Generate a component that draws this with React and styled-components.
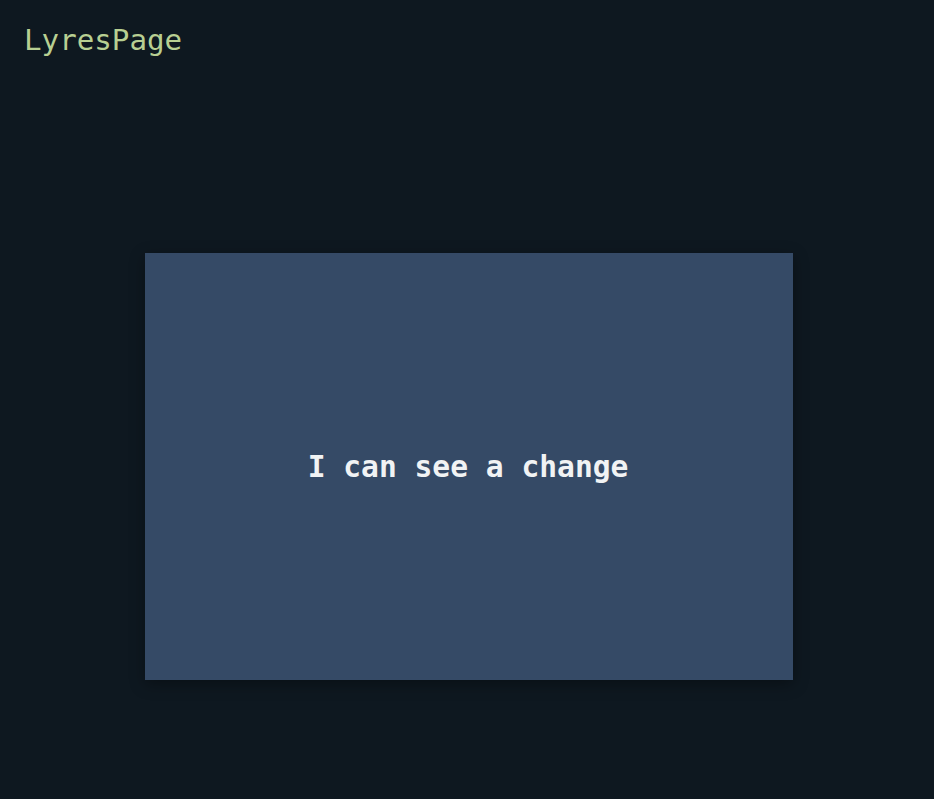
import React from "react";
import styled, { createGlobalStyle } from "styled-components";

const Global = createGlobalStyle`
  html, body { margin: 0; padding: 0; background: #0e1820; }
  body { font-family: "DejaVu Sans Mono", monospace; }
`;

const Page = styled.div`
  width: 934px;
  height: 799px;
  background: #0e1820;
  display: flex;
  flex-direction: column;
`;

const Header = styled.header`
  padding: 20px 24px 0;
  height: 60px;
  box-sizing: border-box;
`;

const Title = styled.h1`
  margin: 0;
  font-family: "DejaVu Sans Mono", monospace;
  font-weight: normal;
  font-size: 29.2px;
  line-height: 40px;
  color: #b8cf92;
`;

const Stage = styled.main`
  padding: 193px 0 0 145px;
`;

const Card = styled.div`
  width: 648px;
  height: 427px;
  background: #354a66;
  box-shadow: 0 4px 14px rgba(0, 0, 0, 0.35);
  display: flex;
  align-items: center;
  justify-content: center;
`;

const Message = styled.p`
  margin: 0;
  font-family: "DejaVu Sans Mono", monospace;
  font-weight: bold;
  font-size: 29.6px;
  color: #f1f3f4;
  padding-right: 2px;
`;

export default function App() {
  return (
    <Page>
      <Global />
      <Header>
        <Title>LyresPage</Title>
      </Header>
      <Stage>
        <Card>
          <Message>I can see a change</Message>
        </Card>
      </Stage>
    </Page>
  );
}
